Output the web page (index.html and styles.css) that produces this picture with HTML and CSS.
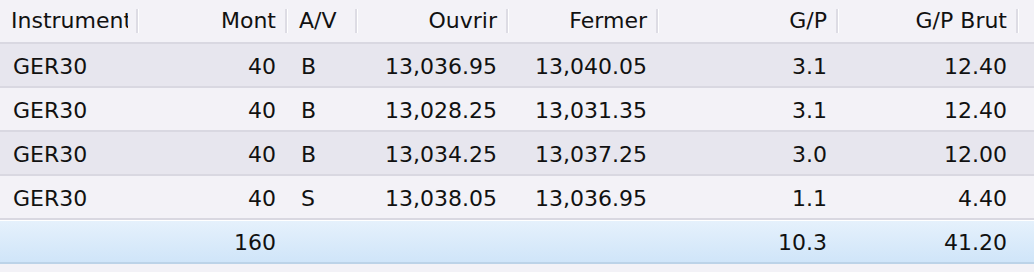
FILE: index.html
```html
<!DOCTYPE html>
<html>
<head>
<meta charset="utf-8">
<link rel="stylesheet" href="styles.css">
</head>
<body>
<div class="grid">
  <div class="row head">
    <div class="hc left"><span class="lbl clip">Instrument</span><i class="sep"></i></div>
    <div class="hc"><span class="lbl">Mont</span><i class="sep"></i></div>
    <div class="hc left"><span class="lbl">A/V</span><i class="sep"></i></div>
    <div class="hc"><span class="lbl">Ouvrir</span><i class="sep"></i></div>
    <div class="hc"><span class="lbl">Fermer</span><i class="sep"></i></div>
    <div class="hc"><span class="lbl">G/P</span><i class="sep"></i></div>
    <div class="hc"><span class="lbl">G/P Brut</span><i class="sep"></i></div>
    <div class="hc"></div>
  </div>
  <div class="row odd">
    <div class="c left">GER30</div><div class="c">40</div><div class="c left">B</div><div class="c">13,036.95</div><div class="c">13,040.05</div><div class="c">3.1</div><div class="c">12.40</div><div class="c"></div>
  </div>
  <div class="row even">
    <div class="c left">GER30</div><div class="c">40</div><div class="c left">B</div><div class="c">13,028.25</div><div class="c">13,031.35</div><div class="c">3.1</div><div class="c">12.40</div><div class="c"></div>
  </div>
  <div class="row odd">
    <div class="c left">GER30</div><div class="c">40</div><div class="c left">B</div><div class="c">13,034.25</div><div class="c">13,037.25</div><div class="c">3.0</div><div class="c">12.00</div><div class="c"></div>
  </div>
  <div class="row even">
    <div class="c left">GER30</div><div class="c">40</div><div class="c left">S</div><div class="c">13,038.05</div><div class="c">13,036.95</div><div class="c">1.1</div><div class="c">4.40</div><div class="c"></div>
  </div>
  <div class="row total">
    <div class="c left"></div><div class="c">160</div><div class="c left"></div><div class="c"></div><div class="c"></div><div class="c">10.3</div><div class="c">41.20</div><div class="c"></div>
  </div>
</div>
</body>
</html>
```
FILE: styles.css
```css
html, body {
  margin: 0;
  padding: 0;
  background: #f3f2f7;
}
body {
  font-family: "DejaVu Sans", Verdana, sans-serif;
  font-size: 22px;
  color: #111;
}
.grid {
  width: 1034px;
}
.row {
  display: grid;
  grid-template-columns: 139px 149px 70px 151px 150px 180px 180px 1fr;
  height: 42px;
  border-bottom: 2px solid #d9d8e1;
}
.head {
  background: #f3f2f7;
}
.hc {
  display: flex;
  align-items: center;
  justify-content: flex-end;
  overflow: hidden;
}
.hc.left {
  justify-content: space-between;
  padding-left: 11px;
}
.hc .lbl {
  padding-right: 9px;
  white-space: nowrap;
  line-height: 42px;
}
.hc .lbl.clip {
  overflow: hidden;
  width: 117px;
  padding-right: 0;
  margin-right: 8px;
}
.hc.left .lbl {
  flex: 1;
}
.sep {
  display: block;
  width: 2px;
  height: 24px;
  background: #dddce4;
  border-right: 1px solid #ffffff;
  flex: none;
}
.c {
  display: flex;
  align-items: center;
  justify-content: flex-end;
  padding: 2px 12px 0 0;
  white-space: nowrap;
}
.c.left {
  justify-content: flex-start;
  padding: 2px 0 0 13px;
}
.odd {
  background: #e7e6ee;
}
.even {
  background: #f3f2f7;
}
.total {
  background: linear-gradient(#e5f1fc, #d0e5f9);
  border-top: 1px solid #ffffff;
  border-bottom: 2px solid #bcd3e8;
  height: 41px;
}
```
